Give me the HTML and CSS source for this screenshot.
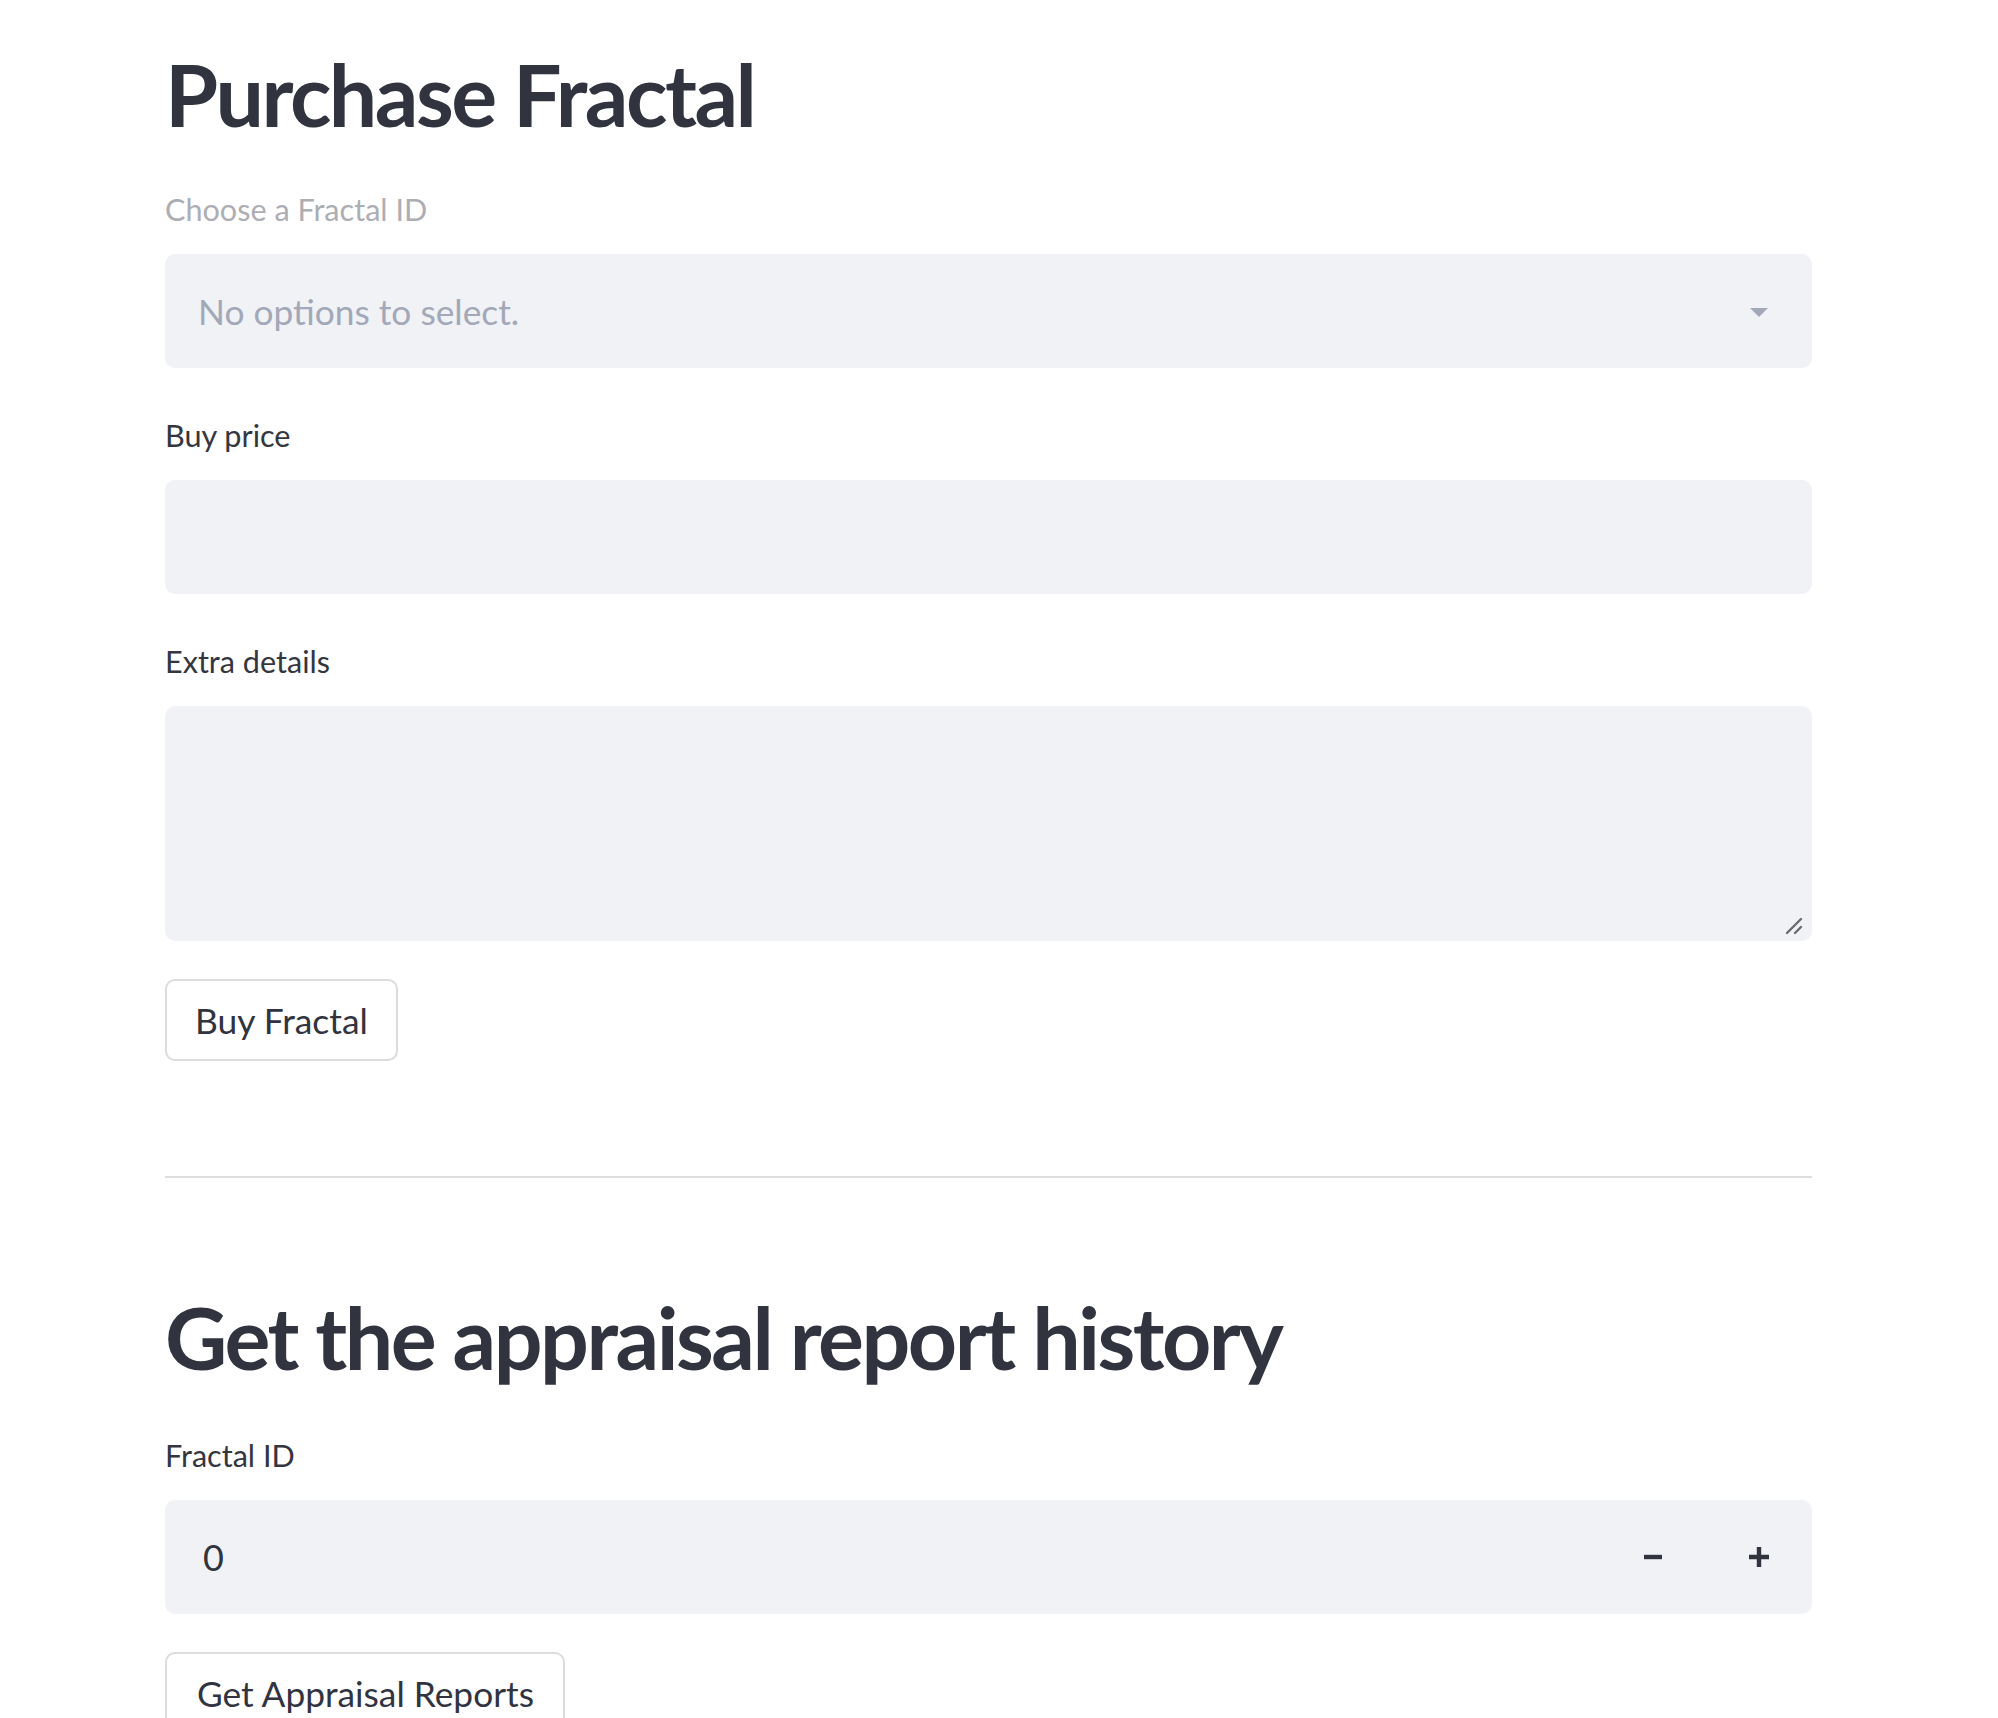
FILE: index.html
```html
<!DOCTYPE html>
<html lang="en">
<head>
<meta charset="utf-8">
<title>Purchase Fractal</title>
<link rel="stylesheet" href="styles.css">
</head>
<body>
<main class="main">
  <h1 class="title">Purchase Fractal</h1>

  <div class="field">
    <div class="label label-disabled">Choose a Fractal ID</div>
    <div class="box select">
      <span class="placeholder">No options to select.</span>
      <svg class="caret" width="18" height="10" viewBox="0 0 18 10"><path d="M0 0 L18 0 L9 9 Z" fill="#a3a8b8"/></svg>
    </div>
  </div>

  <div class="field">
    <div class="label">Buy price</div>
    <div class="box"></div>
  </div>

  <div class="field">
    <div class="label">Extra details</div>
    <div class="box textarea">
      <svg class="grip" width="20" height="20" viewBox="0 0 20 20"><path d="M3 18 L17 4 M11 18 L17 12" stroke="#6b6b70" stroke-width="2.4" stroke-linecap="round" fill="none"/></svg>
    </div>
  </div>

  <button class="btn btn-first">Buy Fractal</button>

  <hr class="divider">

  <h1 class="title title-second">Get the appraisal report history</h1>

  <div class="field">
    <div class="label">Fractal ID</div>
    <div class="box number">
      <span class="value">0</span>
      <div class="steppers">
        <span class="step"><svg width="22" height="22" viewBox="0 0 22 22"><path d="M2 11 H20" stroke="#31333f" stroke-width="4.4"/></svg></span>
        <span class="step"><svg width="22" height="22" viewBox="0 0 22 22"><path d="M1 11 H21 M11 1 V21" stroke="#31333f" stroke-width="4.4"/></svg></span>
      </div>
    </div>
  </div>

  <button class="btn btn-second">Get Appraisal Reports</button>
</main>
</body>
</html>
```

FILE: styles.css
```css
html, body {
  margin: 0;
  padding: 0;
  background: #ffffff;
}

body {
  font-family: Lato, "Noto Sans", sans-serif;
  color: #31333f;
  overflow: hidden;
}

.main {
  width: 1647px;
  margin-left: 165px;
  padding-top: 42px;
}

.title {
  margin: 0 0 44px 0;
  font-size: 86px;
  line-height: 103px;
  font-weight: 700;
  letter-spacing: -2.5px;
  color: #31333f;
}

.title-second {
  margin-top: 107px;
  margin-bottom: 47px;
}

.field {
  margin-bottom: 47px;
}

.label {
  height: 38px;
  line-height: 38px;
  padding-top: 2px;
  font-size: 30.6px;
  margin-bottom: 25px;
  color: #34363f;
}

.label-disabled {
  color: #adaeb3;
}

.box {
  height: 114px;
  background: #f0f2f6;
  border-radius: 10px;
  box-sizing: border-box;
  position: relative;
}

.select {
  display: flex;
  align-items: center;
  padding: 0 44px 0 33px;
  justify-content: space-between;
}

.placeholder {
  font-size: 35.3px;
  color: #a3a8b8;
}

.caret {
  display: block;
  margin-top: 4px;
}

.textarea {
  height: 235px;
}

.grip {
  position: absolute;
  right: 8px;
  bottom: 6px;
}

.number {
  display: flex;
  align-items: center;
  padding: 0 36px 0 38px;
}

.value {
  flex: 1;
  font-size: 36px;
  color: #31333f;
}

.steppers {
  display: flex;
  gap: 84px;
  padding-right: 6px;
}

.step {
  display: flex;
  align-items: center;
  justify-content: center;
  width: 22px;
  height: 22px;
}

.step svg {
  display: block;
}

.field:has(+ .btn) {
  margin-bottom: 38px;
}

.btn {
  display: block;
  height: 82px;
  padding: 0 28px;
  background: #ffffff;
  border: 2px solid #dcdcdf;
  border-radius: 10px;
  font-family: Lato, "Noto Sans", sans-serif;
  font-size: 35.4px;
  color: #31333f;
  cursor: pointer;
}

.btn-second {
  padding: 0 29px 0 30px;
  font-size: 35.3px;
}

.divider {
  margin: 115px 0 0 0;
  border: none;
  height: 2px;
  background: #dedee1;
}
```
